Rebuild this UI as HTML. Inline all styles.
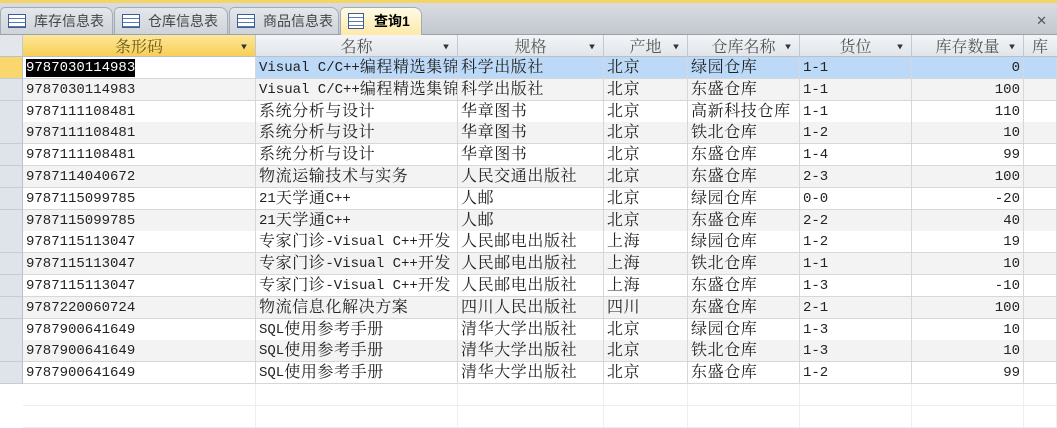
<!DOCTYPE html>
<html><head><meta charset="utf-8"><style>
body{margin:0;width:1057px;height:419px;overflow:hidden;background:#fff;font-family:"Liberation Mono","Noto Sans CJK SC",monospace;position:relative}
.top{position:absolute;left:0;top:0;width:1057px;height:3px;background:#f3d467}
.tabbar{position:absolute;left:0;top:3px;width:1057px;height:31px;background:linear-gradient(#d9dde2,#c3c8cf);border-bottom:1px solid #9aa3ad}
.tab{position:absolute;top:4px;height:27px;border:1px solid #a3abb5;border-bottom:none;border-radius:5px 8px 0 0;background:linear-gradient(#e4e7eb,#cfd4da);font:14px "Liberation Sans","Noto Sans CJK SC",sans-serif;color:#444;line-height:27px;box-sizing:border-box;padding-left:33px}
.tab.act{background:linear-gradient(#fffbe6,#fde9a8);color:#000;font-weight:bold;height:28px}
.ic{position:absolute;left:7px;top:6px;width:18px;height:14px;border:1px solid #3b5f95;background:repeating-linear-gradient(#fff 0 3px,#5a7db3 3px 4px);box-sizing:border-box}
.x{position:absolute;right:10px;top:10px;font:13px "Liberation Sans",sans-serif;color:#555}
.hdr{position:absolute;top:35px;height:22px;background:linear-gradient(#f3f5f7,#e1e5ea);border-right:1px solid #c3c9d1;border-bottom:1px solid #b9c0c8;box-sizing:border-box;font:16px "Noto Serif CJK SC","Noto Sans CJK SC",serif;color:#555;text-align:center;line-height:21px}
.hdr.sel{background:linear-gradient(#fde79a,#f8cf55);color:#6b5a1e}
.hdr i{position:absolute;right:8px;top:1px;font-style:normal;font-size:6px;color:#333}
.row{position:absolute;left:0;width:1057px;height:22px}
.cell{position:absolute;top:0;height:22px;border-right:1px solid #d4d8dd;border-bottom:1px solid #d4d8dd;box-sizing:border-box;font-size:14px;line-height:22px;padding-left:3px;white-space:nowrap;overflow:hidden;color:#222}
.cell s,.cell b{display:inline-block;vertical-align:top;height:22px;text-decoration:none;font-weight:normal}
.cell s{line-height:23px}
.cell b{font-size:16px;font-family:"Noto Serif CJK SC","Noto Sans CJK SC",serif;line-height:17px;letter-spacing:0.6px}
.sc{position:absolute;left:0;width:23px;height:22px;background:#dfe4ea;border-bottom:1px solid #c5ccd4;border-right:1px solid #b9c0c8;box-sizing:border-box}
</style></head><body>
<div class="top"></div>
<div class="tabbar">
<div class="tab" style="left:0;width:113px"><span class="ic"></span>库存信息表</div>
<div class="tab" style="left:114px;width:114px"><span class="ic"></span>仓库信息表</div>
<div class="tab" style="left:229px;width:110px"><span class="ic"></span>商品信息表</div>
<div class="tab act" style="left:340px;width:82px"><span class="ic" style="width:16px;height:16px;top:5px"></span>查询1</div>
<span class="x">✕</span>
</div>
<div class="hdr" style="left:0;width:23px;background:#e3e7ec"></div>
<div class="hdr sel" style="left:23px;width:233px">条形码<i>▼</i></div>
<div class="hdr" style="left:256px;width:202px">名称<i>▼</i></div>
<div class="hdr" style="left:458px;width:146px">规格<i>▼</i></div>
<div class="hdr" style="left:604px;width:84px">产地<i>▼</i></div>
<div class="hdr" style="left:688px;width:112px">仓库名称<i>▼</i></div>
<div class="hdr" style="left:800px;width:112px">货位<i>▼</i></div>
<div class="hdr" style="left:912px;width:112px">库存数量<i>▼</i></div>
<div class="hdr" style="left:1024px;width:40px;text-align:left;padding-left:8px">库</div>
<div id="rows"></div>
<script>
var d=[["9787030114983","Visual C/C++编程精选集锦","科学出版社","北京","绿园仓库","1-1","0"],
["9787030114983","Visual C/C++编程精选集锦","科学出版社","北京","东盛仓库","1-1","100"],
["9787111108481","系统分析与设计","华章图书","北京","高新科技仓库","1-1","110"],
["9787111108481","系统分析与设计","华章图书","北京","铁北仓库","1-2","10"],
["9787111108481","系统分析与设计","华章图书","北京","东盛仓库","1-4","99"],
["9787114040672","物流运输技术与实务","人民交通出版社","北京","东盛仓库","2-3","100"],
["9787115099785","21天学通C++","人邮","北京","绿园仓库","0-0","-20"],
["9787115099785","21天学通C++","人邮","北京","东盛仓库","2-2","40"],
["9787115113047","专家门诊-Visual C++开发","人民邮电出版社","上海","绿园仓库","1-2","19"],
["9787115113047","专家门诊-Visual C++开发","人民邮电出版社","上海","铁北仓库","1-1","10"],
["9787115113047","专家门诊-Visual C++开发","人民邮电出版社","上海","东盛仓库","1-3","-10"],
["9787220060724","物流信息化解决方案","四川人民出版社","四川","东盛仓库","2-1","100"],
["9787900641649","SQL使用参考手册","清华大学出版社","北京","绿园仓库","1-3","10"],
["9787900641649","SQL使用参考手册","清华大学出版社","北京","铁北仓库","1-3","10"],
["9787900641649","SQL使用参考手册","清华大学出版社","北京","东盛仓库","1-2","99"]];
var L=[23,256,458,604,688,800,912,1024],h="";
for(var i=0;i<17;i++){var y=57+i*21.8;var r=d[i];
var bg=i==0?"#bcd9f7":(i%2?"#f3f3f3":"#fff");if(i>=15)bg="#fff";
h+='<div class="row" style="top:'+y+'px;background:'+bg+'"><div class="sc" style="'+(i==0?'background:#f9d66e':'')+(i>=15?';background:#fff;border:none':'')+'"></div>';
for(var c=0;c<8;c++){var w=(L[c+1]||1057)-L[c];var t=r&&c<7?r[c]:"";var st="left:"+L[c]+"px;width:"+w+"px;";
t=t.replace(/([\u4e00-\u9fff]+)|([^\u4e00-\u9fff]+)/g,function(m,a,b){return a?'<b>'+a+'</b>':'<s>'+b.replace(/ /g,'&nbsp;')+'</s>';});
if(c==6)st+="text-align:right;padding-right:3px;";
if(i==0&&c==0){st+="background:#fff;";t='<span style="background:#000;color:#fff;display:inline-block;height:18px;margin-top:2px;line-height:19px">'+r[0]+'</span>';}
if(i>=15)st+="border-color:#eee;";
h+='<div class="cell" style="'+st+'">'+t+'</div>';}
h+='</div>';}
document.getElementById("rows").innerHTML=h;
</script>
</body></html>
